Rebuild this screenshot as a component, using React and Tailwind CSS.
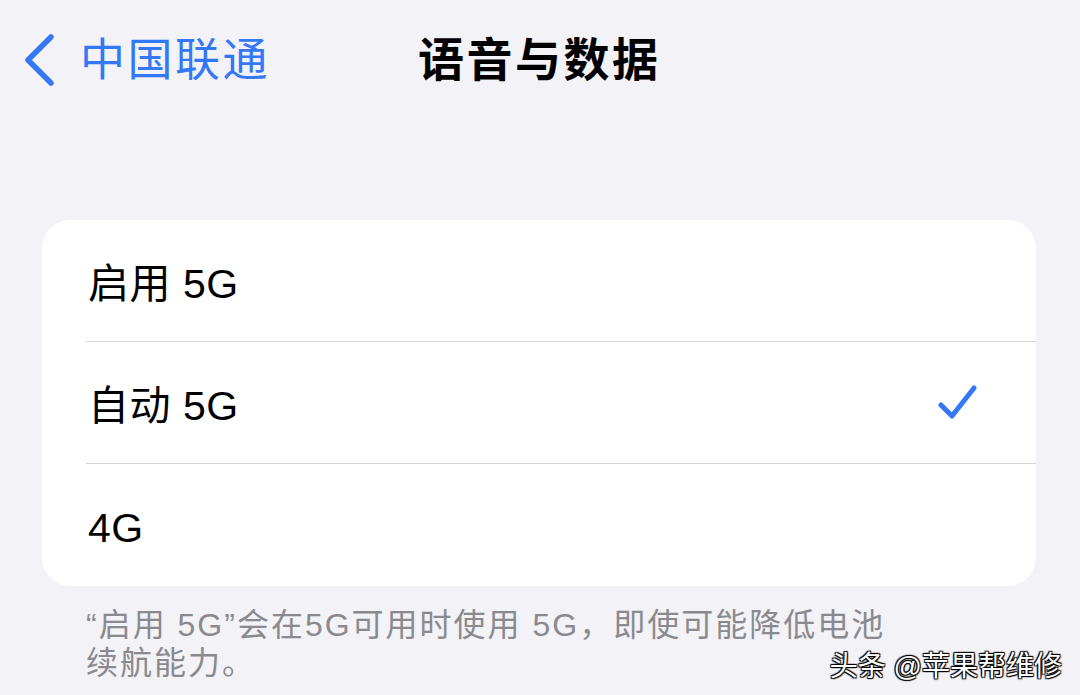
import React from "react";

const font = { fontFamily: '"Liberation Sans", "Noto Sans CJK SC", "Noto Sans", sans-serif' };

function Row({ label, checked, last }) {
  return (
    <div className="relative flex h-[122px] items-center pl-[46px] pr-[58px]">
      <span className="pt-[6px] text-[41px] leading-none text-black tracking-[0.5px]">{label}</span>
      <div className="flex-1" />
      {checked && (
        <svg width="40" height="40" viewBox="0 0 40 40">
          <path d="M3 22 L14 33 L36 5" fill="none" stroke="#3478f6" strokeWidth="5" strokeLinecap="round" strokeLinejoin="round" />
        </svg>
      )}
      {!last && <div className="absolute bottom-0 left-[44px] right-0 h-[1.5px] bg-[#d6d6da]" />}
    </div>
  );
}

export default function App() {
  return (
    <div className="relative h-[695px] w-[1080px] overflow-hidden bg-[#f2f2f7]" style={font}>
      <div className="flex h-[120px] items-center">
        <div className="flex items-center pl-[22px]">
          <svg width="34" height="54" viewBox="0 0 34 54">
            <path d="M29 4 L6 27 L29 50" fill="none" stroke="#3478f6" strokeWidth="5.5" strokeLinecap="round" strokeLinejoin="round" />
          </svg>
          <span className="ml-[24px] text-[45px] leading-none text-[#3478f6] tracking-[2.5px]">中国联通</span>
        </div>
        <span className="ml-[148px] text-[46px] font-bold leading-none text-black tracking-[2.5px]">语音与数据</span>
      </div>
      <div className="ml-[42px] mt-[100px] w-[994px] overflow-hidden rounded-[28px] bg-white">
        <Row label="启用 5G" />
        <Row label="自动 5G" checked />
        <Row label="4G" last />
      </div>
      <div className="mt-[20px] whitespace-nowrap pl-[86px] text-[32px] leading-[38px] tracking-[2px] text-[#8a8a8e]">
        <div>“启用 5G”会在5G可用时使用 5G，即使可能降低电池</div>
        <div>续航能力。</div>
      </div>
      <div
        className="absolute bottom-[14px] right-[18px] text-[28px] leading-none text-white"
        style={{ textShadow: "1px 1px 1px #000, -1px -1px 1px #000, 1px -1px 1px #000, -1px 1px 1px #000" }}
      >
        头条 @苹果帮维修
      </div>
    </div>
  );
}
